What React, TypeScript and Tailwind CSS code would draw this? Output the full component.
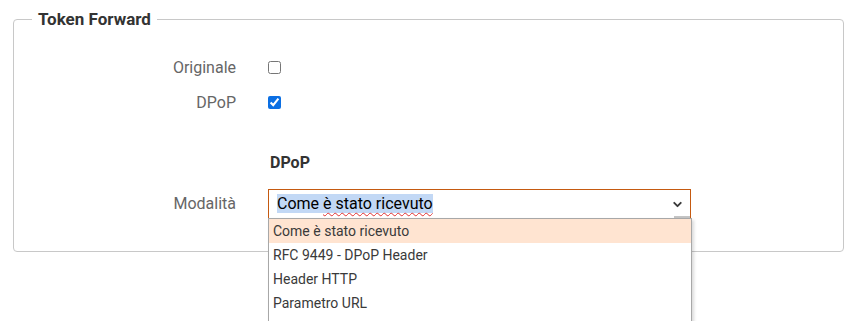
import { ChevronDown } from "lucide-react";

const options = ["Come è stato ricevuto", "RFC 9449 - DPoP Header", "Header HTTP", "Parametro URL"];

export default function App() {
  return (
    <div className="h-[321px] w-[857px] overflow-hidden bg-white pt-[8px] font-['Roboto',sans-serif]">
      <fieldset className="mx-[13px] h-[244px] rounded-[4px] border border-[#c8c8c8] px-0 pb-0">
        <legend className="ml-[18px] px-[6px] text-[17px] font-bold leading-[22px] text-[#333]">Token Forward</legend>

        <div className="mt-[20px] grid grid-cols-[222px_1fr] gap-x-[32px]">
          {/* checkboxes */}
          <label className="flex h-[35px] items-center justify-end text-[16px] text-[#666]">Originale</label>
          <div className="flex h-[35px] items-center">
            <input type="checkbox" className="h-[13px] w-[13px]" readOnly />
          </div>
          <label className="flex h-[35px] items-center justify-end text-[16px] text-[#666]">DPoP</label>
          <div className="flex h-[35px] items-center">
            <input type="checkbox" className="h-[13px] w-[13px] accent-[#0b6fe3]" checked readOnly />
          </div>

          <div />
          <div className="mt-[32px] h-[22px] pl-[2px] text-[16px] font-bold leading-[22px] text-[#333]">DPoP</div>

          <label className="mt-[15px] flex h-[30px] items-center justify-end text-[16px] text-[#666]">Modalità</label>
          <div className="relative mt-[15px] w-[423px]">
            <div className="flex h-[30px] items-center justify-between border border-[#c55a11] pl-[8px] pr-[6px]">
              <span className="text-[16px] leading-[20px] text-black">
                <span className="bg-[#c2d8f5]">
                  Come <span className="underline decoration-[#e03030] decoration-wavy decoration-1 underline-offset-[3px]">è stato ricevuto</span>
                </span>
              </span>
              <ChevronDown size={13} strokeWidth={3.5} className="text-[#3a3a3a]" />
            </div>
            <div className="absolute right-[1px] top-[27px] h-[3px] w-[16px] bg-[#c4c4c4]" />
            <div className="absolute left-0 top-[29px] w-[424px] border border-[#a8a8a8] bg-white shadow-[2px_2px_3px_rgba(0,0,0,0.15)]">
              {options.map((o, i) => (
                <div
                  key={o}
                  className={`flex h-[24px] items-center pl-[4px] text-[14px] text-[#3a3a3a] ${i === 0 ? "bg-[#ffe4d1]" : ""}`}
                >
                  {o}
                </div>
              ))}
              <div className="h-[24px]" />
            </div>
          </div>
        </div>
      </fieldset>
    </div>
  );
}
